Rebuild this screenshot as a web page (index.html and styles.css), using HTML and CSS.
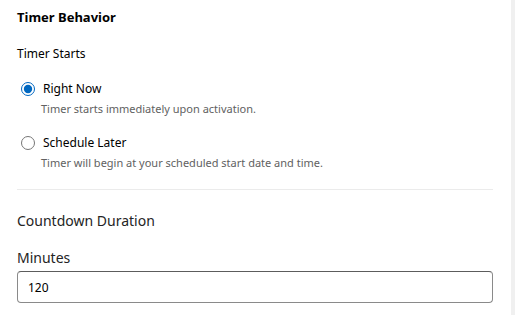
FILE: index.html
```html
<!DOCTYPE html>
<html lang="en">
<head>
    <meta charset="UTF-8">
    <meta name="viewport" content="width=device-width, initial-scale=1.0">
    <title>Timer Behavior</title>
    <link rel="stylesheet" href="styles.css">
</head>
<body>
    <div class="panel">
        <div class="content">
            <h2 class="section-title">Timer Behavior</h2>

            <div class="group-label">Timer Starts</div>

            <div class="option">
                <label class="option-row">
                    <input type="radio" name="start" value="now" checked>
                    <span class="option-name">Right Now</span>
                </label>
                <div class="option-desc">Timer starts immediately upon activation.</div>
            </div>

            <div class="option">
                <label class="option-row">
                    <input type="radio" name="start" value="later">
                    <span class="option-name">Schedule Later</span>
                </label>
                <div class="option-desc">Timer will begin at your scheduled start date and time.</div>
            </div>

            <hr class="divider">

            <h3 class="sub-title">Countdown Duration</h3>

            <label class="field-label" for="minutes">Minutes</label>
            <input type="text" id="minutes" class="field-input" value="120">
        </div>
        <div class="scroll-track"></div>
    </div>
</body>
</html>
```

FILE: styles.css
```css
body {
    font-family: "Segoe UI", "Noto Sans", Arial, sans-serif;
    margin: 0;
    padding: 0;
    background-color: #ffffff;
    color: #000;
}

.panel {
    display: flex;
    height: 315px;
    overflow: hidden;
}

.content {
    flex: 1;
    padding: 8px 18px 0 17px;
}

.scroll-track {
    width: 4px;
    background-color: #f0f0f0;
}

.section-title {
    margin: 0;
    font-size: 13px;
    font-weight: bold;
    line-height: 18px;
}

.group-label {
    margin-top: 20px;
    font-size: 12px;
    line-height: 16px;
}

.option {
    margin-top: 19px;
}

.option + .option {
    margin-top: 19px;
}

.option-row {
    display: flex;
    align-items: center;
    gap: 8px;
    font-size: 12px;
    line-height: 16px;
}

.option-row input {
    margin: 0 0 0 4px;
    width: 14px;
    height: 14px;
    accent-color: #0067c0;
}

.option-desc {
    margin: 4px 0 0 24px;
    font-size: 11px;
    line-height: 15px;
    color: #616161;
}

.divider {
    margin: 19px 0 0;
    border: none;
    border-top: 1px solid #ebebeb;
}

.sub-title {
    margin: 21px 0 0;
    font-size: 14px;
    font-weight: normal;
    line-height: 20px;
    color: #242424;
}

.field-label {
    display: block;
    margin-top: 17px;
    font-size: 14px;
    line-height: 20px;
    color: #242424;
}

.field-input {
    display: block;
    box-sizing: border-box;
    width: 100%;
    height: 32px;
    margin-top: 3px;
    padding: 0 10px;
    font-family: inherit;
    font-size: 12px;
    border: 1px solid #8a8a8a;
    border-top-color: #5c5c5c;
    border-radius: 4px;
}
```
